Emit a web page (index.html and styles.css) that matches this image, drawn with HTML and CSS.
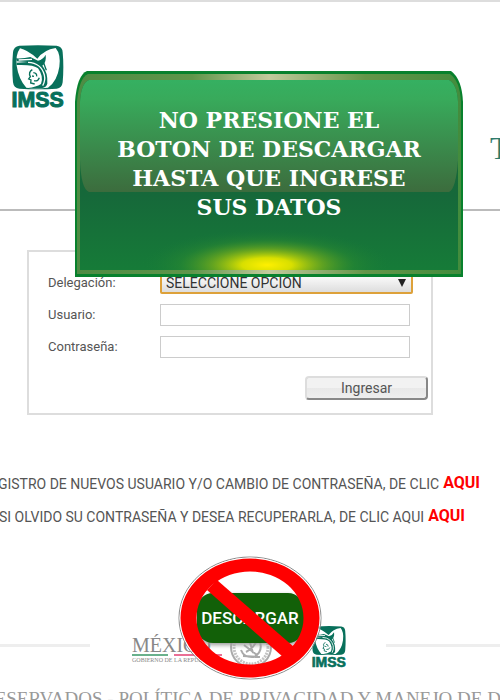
FILE: index.html
```html
<!DOCTYPE html>
<html lang="es">
<head>
<meta charset="utf-8">
<meta name="viewport" content="width=device-width, initial-scale=1">
<title>IMSS</title>
<link rel="stylesheet" href="styles.css">
</head>
<body>
<svg width="0" height="0" class="defs" aria-hidden="true">
  <symbol id="imss" viewBox="0 0 156 192">
    <path fill="#08705b" d="M22 2Q78-1 134 2Q151 4 152 22Q156 66 152 112Q150 129 134 131Q78 134 22 131Q5 129 3 112Q-1 66 3 22Q5 4 22 2Z"/>
    <path fill="#fff" d="M24 10Q45 14 76 41Q96 14 131 9Q147 28 142 65Q136 108 108 128Q70 132 43 128Q20 103 14 62Q10 30 24 10Z"/>
    <path fill="#08705b" d="M12 40Q36 41 55 36L78 47Q94 43 101 29Q104 52 91 62Q108 82 106 116Q102 127 91 129L48 129Q72 126 87 117Q96 95 78 70Q65 58 14 60L14 53L48 51L14 49Z"/>
    <path fill="none" stroke="#fff" stroke-width="4" d="M20 45L60 43M48 52Q88 54 97 90Q101 106 92 122"/>
    <path fill="#fff" d="M64 75Q85 78 87 100Q85 115 69 121Q57 118 57 111Q49 106 54 98Q48 86 64 75Z"/>
    <path fill="none" stroke="#08705b" stroke-width="4" d="M61 74Q48 82 55 95L50 102L57 105L56 114L68 117M64 83Q75 84 74 94M60 93L66 94M66 107Q78 110 82 98M92 46L103 76"/>
    <text x="77" y="187" text-anchor="middle" class="imss-word">IMSS</text>
  </symbol>
</svg>
<div class="page">
  <header class="header">
    <svg class="logo" role="img" aria-label="IMSS"><use href="#imss"/></svg>
    <h1 class="title">T</h1>
  </header>

  <main>
    <form class="login">
      <label for="delegacion">Delegación:</label>
      <div class="picker">
        <select id="delegacion"><option>SELECCIONE OPCION</option></select>
        <span class="arrow" aria-hidden="true"></span>
      </div>
      <label for="usuario">Usuario:</label>
      <input id="usuario" type="text">
      <label for="clave">Contraseña:</label>
      <input id="clave" type="password">
      <button class="enter" type="button">Ingresar</button>
    </form>

    <div class="notes">
      <p class="note"><span>REGISTRO DE NUEVOS USUARIO Y/O CAMBIO DE CONTRASEÑA, DE CLIC</span><a href="#registro">AQUI</a></p>
      <p class="note recover"><span>SI OLVIDO SU CONTRASEÑA Y DESEA RECUPERARLA, DE CLIC AQUI</span><a href="#recuperar">AQUI</a></p>
    </div>
  </main>

  <footer class="footer">
    <div class="brands">
      <span class="rule"></span>
      <div class="mexico"><b>MÉXICO</b><i class="flag"></i><small>GOBIERNO DE LA REPÚBLICA</small></div>
      <svg class="seal" viewBox="0 0 44 44" aria-hidden="true">
        <g fill="none" stroke="#aaa">
          <circle cx="22" cy="22" r="20" stroke-width="2"/>
          <circle cx="22" cy="22" r="17" stroke-width="3" stroke="#c4c4c4" stroke-dasharray="2 1"/>
          <path d="M12 17Q22 7 31 17Q34 27 25 32Q15 33 12 25M15 20L28 30M17 27Q25 23 28 15M14 31L31 32M20 14L24 28" stroke-width="2"/>
        </g>
      </svg>
      <svg class="logo small" role="img" aria-label="IMSS"><use href="#imss"/></svg>
      <span class="rule end"></span>
    </div>
    <p class="legal">RESERVADOS - POLÍTICA DE PRIVACIDAD Y MANEJO DE DATOS</p>
  </footer>

  <div class="download">
    <button type="button">DESCARGAR</button>
    <svg viewBox="0 0 144 124" aria-hidden="true">
      <ellipse cx="72" cy="62" rx="71" ry="61" fill="none" stroke="#888" stroke-width="1"/>
      <ellipse cx="72" cy="62" rx="70" ry="60" fill="none" stroke="#fff" stroke-width="1"/>
      <path fill="#f00" fill-rule="evenodd" d="M2.500 62A69.500 59.500 0 1 0 141.500 62A69.500 59.500 0 1 0 2.500 62ZM18.500 62A53.500 46.500 0 1 1 125.500 62A53.500 46.500 0 1 1 18.500 62Z"/>
      <path fill="#f00" d="M29 34L39 24L116 91L105 101Z"/>
    </svg>
  </div>

  <aside class="banner">
    <svg class="banner-art" viewBox="0 0 388 208" preserveAspectRatio="none" aria-hidden="true">
      <defs>
        <linearGradient id="base" x1="0" y1="0" x2="0" y2="1">
          <stop offset="0" stop-color="#176b34"/><stop offset=".6" stop-color="#16683a"/><stop offset="1" stop-color="#167b38"/>
        </linearGradient>
        <linearGradient id="gloss" x1="0" y1="0" x2="0" y2="1">
          <stop offset="0" stop-color="#35b061"/><stop offset=".17" stop-color="#38aa5b"/><stop offset="1" stop-color="#3c6c3d"/>
        </linearGradient>
        <linearGradient id="edge">
          <stop offset="0" stop-color="#4e8b43"/><stop offset=".3" stop-color="#5f964a"/><stop offset=".5" stop-color="#c3ca9c"/><stop offset=".75" stop-color="#649649"/><stop offset="1" stop-color="#438c3d"/>
        </linearGradient>
        <radialGradient id="glow">
          <stop offset="0" stop-color="#fff000"/><stop offset=".2" stop-color="#d8df00"/><stop offset=".45" stop-color="#8dbb13" stop-opacity=".6"/><stop offset=".7" stop-color="#3f9a28" stop-opacity=".25"/><stop offset="1" stop-color="#167b38" stop-opacity="0"/>
        </radialGradient>
        <clipPath id="inside"><rect x="5" y="10" width="378" height="190"/></clipPath>
      </defs>
      <path fill="#08812d" d="M0 207V32Q2 5 12 1H376Q387 9 388 32V207Z"/>
      <path fill="url(#edge)" d="M2 204V32Q4 8 13 4H375Q385 11 386 32V204Z"/>
      <path fill="url(#base)" d="M5 200V32Q6 13 14 10H374Q382 14 383 32V200Z"/>
      <path fill="url(#gloss)" d="M5 32Q6 13 14 10H374Q382 14 383 32V90Q381 119 374 122H14Q6 119 5 90Z"/>
      <ellipse cx="192" cy="195" rx="125" ry="36" fill="url(#glow)" clip-path="url(#inside)"/>
    </svg>
    <p>NO PRESIONE EL<br>BOTON DE DESCARGAR<br>HASTA QUE INGRESE<br>SUS DATOS</p>
  </aside>
</div>
</body>
</html>
```
FILE: styles.css
```css
* { box-sizing: border-box; }

body {
  margin: 0;
  background: #fff;
  color: #555;
  font: 14px/22px Roboto, "Liberation Sans", sans-serif;
}

p, h1 { margin: 0; }

input, select, button { font: inherit; color: inherit; }

.defs { position: absolute; }

.page {
  position: relative;
  display: flex;
  flex-direction: column;
  height: 100vh;
  overflow: hidden;
  border-top: 2px solid #ddd;
}

.header {
  display: flex;
  justify-content: space-between;
  padding: 43px 0 0 11px;
  height: 209px;
  flex: none;
  border-bottom: 2px solid #bbb;
  overflow: hidden;
}

.logo { width: 54px; height: 64px; }

.imss-word {
  font: bold 64px "Liberation Sans", sans-serif;
  fill: #08705b;
  stroke: #08705b;
  stroke-width: 3px;
}

.title {
  flex: none;
  width: 10px;
  padding-top: 85px;
  color: #2f7a6c;
  font: 32px/36px "Liberation Serif", serif;
}

.login {
  display: grid;
  grid-template-columns: 112px 250px;
  grid-auto-rows: 22px;
  row-gap: 10px;
  width: 406px;
  max-width: 100%;
  margin: 39px 0 0 27px;
  padding: 20px 0 23px 19px;
  border: 2px solid #ddd;
}

.login label { font-size: 13px; }

.login input {
  width: 100%;
  padding: 0 4px;
  border: 1px solid #ccc;
  background: #fff;
}

.picker { position: relative; margin-right: -3px; }

.picker select {
  appearance: none;
  display: block;
  width: 100%;
  height: 22px;
  padding: 0 4px;
  border: 2px solid #dda13a;
  border-radius: 2px;
  background: linear-gradient(#fff, #ddd);
  color: #333;
  line-height: 18px;
}

.arrow {
  position: absolute;
  right: 7px;
  top: 7px;
  border: solid transparent;
  border-width: 8px 4px 0;
  border-top-color: #222;
}

.enter {
  grid-column: 1 / -1;
  justify-self: end;
  width: 123px;
  height: 24px;
  margin: 8px -18px 0 0;
  padding: 0;
  border: 2px solid;
  border-color: #ddd #888 #888 #ddd;
  border-radius: 4px;
  background: linear-gradient(#f2f2f2 50%, #e8e8e8 50%, #eee);
  line-height: 18px;
}

.notes {
  display: grid;
  grid-template-columns: minmax(0, 1fr);
  gap: 10px;
  margin-top: 57px;
}

.note {
  display: flex;
  justify-content: flex-end;
  gap: 4px;
  padding-right: 20px;
  white-space: nowrap;
}

.note span { padding-top: 1px; }

.recover { padding-right: 35px; }

.note a { color: #f00; font-weight: 700; font-size: 16px; text-decoration: none; }

.footer { margin-top: 97px; }

.brands { display: flex; align-items: center; }

.rule { flex: none; width: 18%; height: 3px; margin-bottom: 4px; background: #eee; }

.rule.end { flex: 1; margin-left: 39px; }

.mexico {
  display: flex;
  flex: none;
  flex-direction: column;
  width: 90px;
  margin: 6px 0 0 42px;
  color: #888;
  font-family: "Liberation Serif", serif;
}

.mexico b { font-size: 20px; line-height: 18px; font-weight: 400; }

.mexico small { font-size: 6px; line-height: 8px; white-space: nowrap; }

.flag {
  height: 2px;
  background: linear-gradient(90deg, #69b18c 36px, #fff 36px 42px, #ea6f95 42px);
}

.seal { flex: none; width: 44px; height: 44px; margin: 0 0 0 7px; }

.small { flex: none; width: 36px; height: 42px; margin-left: 38px; }

.legal {
  display: flex;
  justify-content: center;
  margin-top: 20px;
  padding-left: 30px;
  color: #999;
  font: 19px/20px "Liberation Serif", serif;
  white-space: nowrap;
}

.download {
  position: absolute;
  top: 554px;
  left: 50%;
  display: grid;
  place-items: center;
  width: 144px;
  height: 124px;
  margin-left: -72px;
}

.download button {
  width: 107px;
  height: 50px;
  padding: 0;
  border: 0;
  border-radius: 16px;
  background: #126008;
  box-shadow: 0 2px 4px #999;
  color: #fff;
  font-size: 17px;
  font-weight: 500;
}

.download svg { position: absolute; inset: 0; pointer-events: none; }

.banner {
  position: absolute;
  top: 68px;
  left: 75px;
  right: 37px;
  height: 208px;
  padding-top: 36px;
  color: #fff;
  font: bold 22px/29px "DejaVu Serif", serif;
  text-align: center;
}

.banner-art { position: absolute; inset: 0; width: 100%; height: 100%; }

.banner p { position: relative; white-space: nowrap; }
```
